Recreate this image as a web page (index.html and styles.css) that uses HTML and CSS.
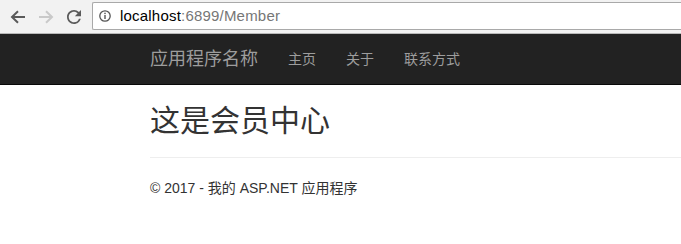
FILE: index.html
```html
<!DOCTYPE html>
<html lang="zh-CN">
<head>
  <meta charset="UTF-8">
  <meta name="viewport" content="width=device-width, initial-scale=1.0">
  <title>会员中心 - 我的 ASP.NET 应用程序</title>
  <link rel="stylesheet" href="styles.css">
</head>
<body>
  <div class="browser-bar">
    <svg class="nav-btn back" width="15" height="14" viewBox="0 0 15 14">
      <path d="M15 7H2.5M8 1.2L2 7l6 5.8" fill="none" stroke="#5a5a5a" stroke-width="2"/>
    </svg>
    <svg class="nav-btn forward" width="15" height="14" viewBox="0 0 15 14">
      <path d="M0 7h12.5M7 1.2L13 7l-6 5.8" fill="none" stroke="#c9c9c9" stroke-width="2"/>
    </svg>
    <svg class="nav-btn reload" width="14" height="14" viewBox="4 4 16 16">
      <path d="M17.65 6.35A7.96 7.96 0 0 0 12 4c-4.42 0-7.99 3.58-7.99 8s3.57 8 7.99 8c3.73 0 6.84-2.55 7.73-6h-2.08A5.99 5.99 0 0 1 12 18c-3.31 0-6-2.69-6-6s2.69-6 6-6c1.66 0 3.14 0.69 4.22 1.78L13 11h7V4l-2.35 2.35z" fill="#5a5a5a"/>
    </svg>
    <div class="url-box">
      <svg class="info-icon" width="12" height="12" viewBox="0 0 12 12">
        <circle cx="6" cy="6" r="5.2" fill="none" stroke="#555" stroke-width="1.3"/>
        <rect x="5.3" y="5" width="1.4" height="4" fill="#555"/>
        <rect x="5.3" y="2.7" width="1.4" height="1.4" fill="#555"/>
      </svg>
      <span class="url"><span class="host">localhost</span>:6899/Member</span>
    </div>
  </div>

  <div class="navbar">
    <div class="container navbar-inner">
      <a class="navbar-brand" href="#">应用程序名称</a>
      <ul class="nav">
        <li><a href="#">主页</a></li>
        <li><a href="#">关于</a></li>
        <li><a href="#">联系方式</a></li>
      </ul>
    </div>
  </div>

  <div class="container body-content">
    <h2>这是会员中心</h2>
    <hr>
    <footer>
      <p>&copy; 2017 - 我的 ASP.NET 应用程序</p>
    </footer>
  </div>
</body>
</html>
```

FILE: styles.css
```css
body {
  margin: 0;
  font-family: "Liberation Sans", "Noto Sans CJK SC", sans-serif;
  font-size: 14px;
  line-height: 20px;
  color: #333;
  background-color: #fff;
}
a {
  text-decoration: none;
}

/* browser toolbar */
.browser-bar {
  display: flex;
  align-items: center;
  height: 33px;
  padding-left: 10px;
  background-color: #f2f2f2;
  border-bottom: 1px solid #b9b9b9;
}
.nav-btn {
  display: block;
  flex: none;
}
.back {
  margin-right: 14px;
}
.forward {
  margin-right: 13px;
}
.reload {
  margin-right: 11px;
}
.url-box {
  flex: 1;
  display: flex;
  align-items: center;
  align-self: flex-start;
  height: 26px;
  margin-top: 2px;
  padding-left: 6px;
  background-color: #fff;
  border: 1px solid #a9a9a9;
  border-right: none;
  border-radius: 2px 0 0 2px;
}
.info-icon {
  display: block;
  margin-right: 9px;
}
.url {
  font-family: "Liberation Sans", sans-serif;
  font-size: 15px;
  letter-spacing: 0.2px;
  color: #767676;
}
.url .host {
  color: #000;
}

/* layout */
.container {
  padding-left: 150px;
}
.navbar {
  height: 50px;
  background-color: #222;
  border-bottom: 1px solid #080808;
}
.navbar-inner {
  display: flex;
}
.navbar-brand {
  padding: 15px 15px 15px 0;
  font-size: 18px;
  line-height: 20px;
  color: #9d9d9d;
}
.nav {
  display: flex;
  margin: 0;
  padding: 0;
  list-style: none;
}
.nav a {
  display: block;
  padding: 15px;
  color: #9d9d9d;
}
h2 {
  margin: 19px 0 10px;
  font-size: 30px;
  font-weight: 400;
  line-height: 33px;
}
hr {
  margin: 20px 0;
  border: 0;
  border-top: 1px solid #eee;
}
footer p {
  margin: 0 0 10px;
}
```
